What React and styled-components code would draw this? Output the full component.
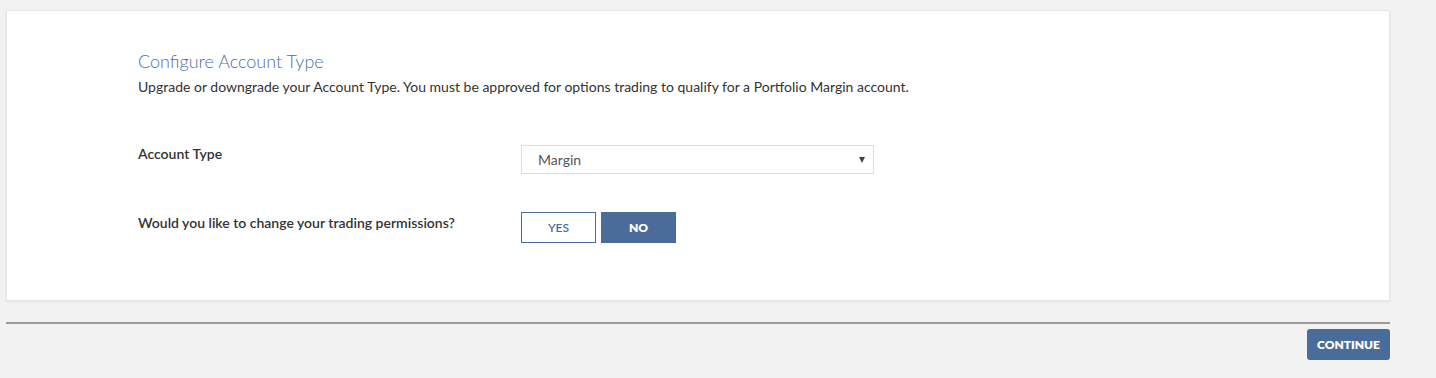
import React from "react";
import styled, { createGlobalStyle } from "styled-components";

const Global = createGlobalStyle`
  html, body { margin: 0; padding: 0; background: #f2f2f2; }
  body { font-family: Lato, "Open Sans", Arial, sans-serif; color: #333; }
`;

const Page = styled.div`
  padding: 10px 46px 0 6px;
  display: flex;
  flex-direction: column;
`;

const Card = styled.section`
  background: #fff;
  border: 1px solid #e6e6e6;
  box-shadow: 0 1px 2px rgba(0,0,0,0.08);
  padding: 39px 0 48px 131px;
  height: 291px;
  box-sizing: border-box;
`;

const Title = styled.h2`
  margin: 0;
  font-size: 18px;
  font-weight: 300;
  color: #4b6fa6;
  line-height: 22px;
`;

const Desc = styled.p`
  margin: 6px 0 0;
  font-size: 14px;
  color: #333;
  line-height: 18px;
`;

const Row = styled.div`
  display: grid;
  grid-template-columns: 383px 353px;
  align-items: start;
  margin-top: ${p => p.$mt}px;
`;

const Label = styled.div`
  font-size: 14px;
  font-weight: 600;
  color: #333;
  line-height: 18px;
  padding-top: ${p => p.$pt}px;
`;

const Select = styled.div`
  height: 29px;
  box-sizing: border-box;
  border: 1px solid #dcdcdc;
  display: flex;
  align-items: center;
  justify-content: space-between;
  padding: 0 8px 0 16px;
  font-size: 14px;
  color: #555;
`;

const Caret = styled.span`
  width: 0; height: 0;
  border-left: 3px solid transparent;
  border-right: 3px solid transparent;
  border-top: 6px solid #444;
`;

const Toggle = styled.div`
  display: flex;
  gap: 5px;
`;

const ToggleBtn = styled.button`
  width: 75px;
  height: 31px;
  box-sizing: border-box;
  border: 1px solid #4a6c9b;
  background: ${p => (p.$active ? "#4a6c9b" : "#fff")};
  color: ${p => (p.$active ? "#fff" : "#4a6c9b")};
  font-family: inherit;
  font-size: 12px;
  font-weight: ${p => (p.$active ? 800 : 600)};
  padding: 0;
  cursor: pointer;
`;

const Divider = styled.hr`
  margin: 21px 0 0;
  border: 0;
  height: 2px;
  background: #9b9b9b;
`;

const Footer = styled.div`
  display: flex;
  justify-content: flex-end;
  padding-top: 5px;
`;

const Continue = styled.button`
  width: 83px;
  height: 31px;
  border: 0;
  border-radius: 3px;
  background: #4a6c9b;
  color: #fff;
  font-family: inherit;
  font-weight: 800;
  font-size: 12px;
  padding: 0;
`;

export default function App() {
  return (
    <>
      <Global />
      <Page>
        <Card>
          <Title>Configure Account Type</Title>
          <Desc>
            Upgrade or downgrade your Account Type. You must be approved for options trading to qualify for a Portfolio Margin account.
          </Desc>
          <Row $mt={49}>
            <Label $pt={0}>Account Type</Label>
            <Select>
              <span>Margin</span>
              <Caret />
            </Select>
          </Row>
          <Row $mt={38}>
            <Label $pt={2}>Would you like to change your trading permissions?</Label>
            <Toggle>
              <ToggleBtn>YES</ToggleBtn>
              <ToggleBtn $active>NO</ToggleBtn>
            </Toggle>
          </Row>
        </Card>
        <Divider />
        <Footer>
          <Continue>CONTINUE</Continue>
        </Footer>
      </Page>
    </>
  );
}
